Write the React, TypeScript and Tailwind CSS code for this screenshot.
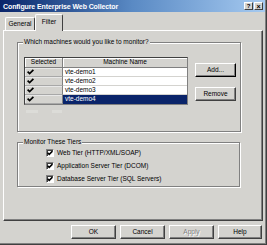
import React from "react";

const Check = () => (
  <svg width="7" height="6" viewBox="0 0 7 6" className="block">
    <path d="M0.6 2.6 L2.6 4.6 L6.4 0.8" stroke="#000" strokeWidth="1.7" fill="none" />
  </svg>
);

const Btn = ({ className, children, disabled }: { className: string; children: React.ReactNode; disabled?: boolean }) => (
  <div
    className={
      "flex items-center justify-center h-[14px] border border-t-white border-l-white border-r-[#404040] border-b-[#404040] shadow-[inset_-1px_-1px_0_#808080] " +
      className
    }
  >
    <span className={disabled ? "text-[#808080] [text-shadow:1px_1px_0_#fff]" : "text-black"}>{children}</span>
  </div>
);

const rows = ["vte-demo1", "vte-demo2", "vte-demo3", "vte-demo4"];

const tiers = ["Web Tier (HTTP/XML/SOAP)", "Application Server Tier (DCOM)", "Database Server Tier (SQL Servers)"];

export default function App() {
  return (
    <div
      className="w-[267px] h-[245px] bg-[#d4d3cf] flex flex-col border-r border-b border-r-[#404040] border-b-[#404040] shadow-[inset_-1px_-1px_0_#808080] text-[6.5px] leading-none text-black overflow-hidden"
      style={{ fontFamily: '"Liberation Sans", Arial, sans-serif' }}
    >
      {/* Title bar */}
      <div className="h-[12px] mr-[1px] flex items-center bg-linear-to-r from-[#0a246a] via-[#5a8ac4] to-[#a6caf0] pl-[3px] pr-[2px]">
        <span className="text-white font-bold text-[7px] tracking-[-0.1px]">Configure Enterprise Web Collector</span>
        <div className="ml-auto flex gap-[1px]">
          <div className="w-[9px] h-[8px] bg-[#d4d3cf] border border-t-white border-l-white border-r-[#404040] border-b-[#404040] flex items-center justify-center text-[6px] font-bold">?</div>
          <div className="w-[9px] h-[8px] bg-[#d4d3cf] border border-t-white border-l-white border-r-[#404040] border-b-[#404040] flex items-center justify-center text-[7px] font-bold">×</div>
        </div>
      </div>

      {/* Tabs */}
      <div className="mt-[2px] h-[16px] flex items-end pl-[5px]">
        <div className="h-[13px] w-[30px] flex items-center justify-center border-t border-l border-r border-t-white border-l-white border-r-[#404040] rounded-tl-[2px] rounded-tr-[2px]">
          General
        </div>
        <div className="relative z-10 -mb-[1px] h-[17px] w-[28px] bg-[#d4d3cf] flex items-center justify-center border-t border-l border-r border-t-white border-l-white border-r-[#404040] rounded-tl-[2px] rounded-tr-[2px] pb-[2px]">
          Filter
        </div>
      </div>

      {/* Panel */}
      <div className="ml-[3px] w-[260px] h-[191px] border border-t-white border-l-white border-r-[#404040] border-b-[#404040] shadow-[inset_-1px_-1px_0_#808080] flex flex-col">
        {/* Group 1 */}
        <div className="relative ml-[13px] mt-[11px] w-[224px] h-[90px] border border-[#808080] shadow-[inset_1px_1px_0_#fff,1px_1px_0_#fff]">
          <span className="absolute -top-[4px] left-[5px] bg-[#d4d3cf] px-[1px]">Which machines would you like to monitor?</span>
          <div className="flex pl-[6px] pt-[14px]">
            {/* Table */}
            <div className="w-[164px] border border-t-[#404040] border-l-[#404040] border-r-[#808080] border-b-[#808080] flex flex-col">
              <div className="flex h-[10px]">
                <div className="w-[38px] flex items-center justify-center border-r border-b border-r-[#808080] border-b-[#808080] shadow-[inset_1px_1px_0_#fff]">
                  Selected
                </div>
                <div className="flex-1 flex items-center justify-center border-b border-b-[#808080] shadow-[inset_1px_1px_0_#fff]">
                  Machine Name
                </div>
              </div>
              {rows.map((r, i) => (
                <div key={r} className="flex h-[9px]">
                  <div className="w-[38px] flex items-center pl-[2px] border-r border-b border-r-[#808080] border-b-[#a8a8a8] shadow-[inset_1px_1px_0_#e8e8e8]">
                    <Check />
                  </div>
                  <div
                    className={
                      i === 3
                        ? "flex-1 flex items-center pl-[2px] bg-[#0a246a] text-white"
                        : "flex-1 flex items-center pl-[2px] bg-white border-b border-b-[#d4d3cf]"
                    }
                  >
                    {r}
                  </div>
                </div>
              ))}
            </div>
            {/* Buttons */}
            <div className="ml-[7px] mt-[6px] flex flex-col gap-[10px]">
              <Btn className="w-[41px] border-r-black border-b-black">Add...</Btn>
              <Btn className="w-[41px]">Remove</Btn>
            </div>
          </div>
          <div className="flex gap-[14px] pl-[8px] mt-[5px]">
            <div className="w-[12px] h-[3px] bg-[#dcdcd8]" />
            <div className="w-[10px] h-[3px] bg-[#dcdcd8]" />
          </div>
        </div>

        {/* Group 2 */}
        <div className="relative ml-[13px] mt-[10px] w-[223px] h-[45px] border border-[#808080] shadow-[inset_1px_1px_0_#fff,1px_1px_0_#fff]">
          <span className="absolute -top-[4px] left-[5px] bg-[#d4d3cf] px-[1px]">Monitor These Tiers</span>
          <div className="flex flex-col pl-[28px] pt-[6px] gap-[5px]">
            {tiers.map((t) => (
              <div key={t} className="flex items-center h-[8px]">
                <div className="w-[8px] h-[8px] bg-white border border-t-[#808080] border-l-[#808080] border-r-white border-b-white shadow-[inset_1px_1px_0_#404040] flex items-center justify-center">
                  <Check />
                </div>
                <span className="ml-[3px]">{t}</span>
              </div>
            ))}
          </div>
        </div>
      </div>

      {/* Bottom buttons */}
      <div className="mt-[4px] flex pl-[71px] gap-[4px]">
        <Btn className="w-[45px]">OK</Btn>
        <Btn className="w-[45px]">Cancel</Btn>
        <Btn className="w-[45px]" disabled>
          Apply
        </Btn>
        <Btn className="w-[44px]">Help</Btn>
      </div>
    </div>
  );
}
